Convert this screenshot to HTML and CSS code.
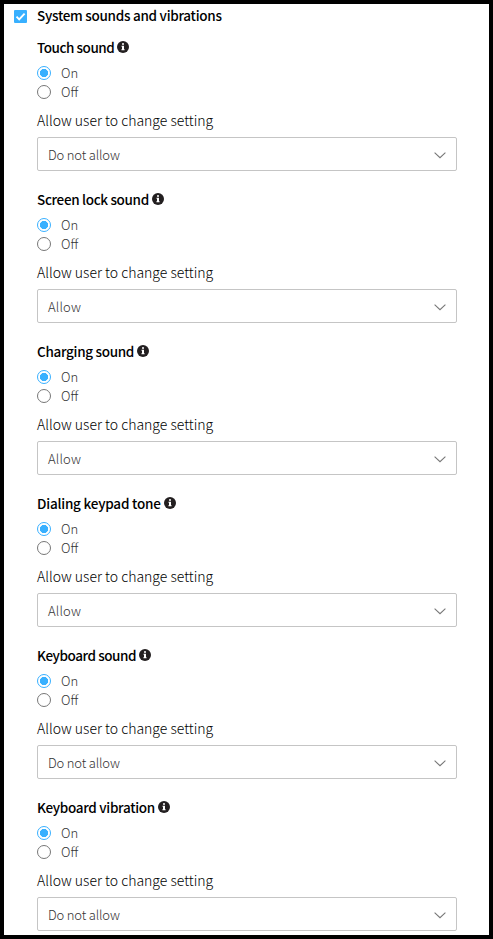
FILE: index.html
```
<!DOCTYPE html>
<html lang="en">
<head>
<meta charset="utf-8">
<title>System sounds and vibrations</title>
<link rel="stylesheet" href="styles.css">
</head>
<body>
<svg class="defs" width="0" height="0" aria-hidden="true">
  <symbol id="info" viewBox="0 0 12 12">
    <circle cx="6" cy="6" r="6" fill="#231f20"/>
    <path d="M5 2.2h2v1.5H5zM4.5 4.8H7v3.5h.6v1H4.4v-1H5V5.8h-.5z" fill="#fff"/>
  </symbol>
  <symbol id="chevron" viewBox="0 0 12 7">
    <path d="M.6.7 6 5.7 11.4.7" fill="none" stroke="#777" stroke-width="1.1"/>
  </symbol>
</svg>
<main class="panel">
  <label class="section-head">
    <svg class="check" viewBox="0 0 13 13"><rect width="13" height="13" rx="1" fill="#38b0ff"/><path d="M2.5 6.6 5.2 9.3 10.6 3.6" fill="none" stroke="#fff" stroke-width="1.9"/></svg>
    <span class="title">System sounds and vibrations</span>
  </label>
  <section class="setting">
    <h2 class="name"><span class="title touch">Touch sound</span><svg class="info"><use href="#info"/></svg></h2>
    <div class="option"><i class="radio on"></i><span>On</span></div>
    <div class="option"><i class="radio"></i><span>Off</span></div>
    <div class="caption">Allow user to change setting</div>
    <div class="select"><span class="value deny">Do not allow</span><svg class="chevron"><use href="#chevron"/></svg></div>
  </section>
  <section class="setting">
    <h2 class="name"><span class="title lock">Screen lock sound</span><svg class="info"><use href="#info"/></svg></h2>
    <div class="option"><i class="radio on"></i><span>On</span></div>
    <div class="option"><i class="radio"></i><span>Off</span></div>
    <div class="caption">Allow user to change setting</div>
    <div class="select"><span class="value">Allow</span><svg class="chevron"><use href="#chevron"/></svg></div>
  </section>
  <section class="setting">
    <h2 class="name"><span class="title charging">Charging sound</span><svg class="info"><use href="#info"/></svg></h2>
    <div class="option"><i class="radio on"></i><span>On</span></div>
    <div class="option"><i class="radio"></i><span>Off</span></div>
    <div class="caption">Allow user to change setting</div>
    <div class="select"><span class="value">Allow</span><svg class="chevron"><use href="#chevron"/></svg></div>
  </section>
  <section class="setting">
    <h2 class="name"><span class="title dialing">Dialing keypad tone</span><svg class="info"><use href="#info"/></svg></h2>
    <div class="option"><i class="radio on"></i><span>On</span></div>
    <div class="option"><i class="radio"></i><span>Off</span></div>
    <div class="caption">Allow user to change setting</div>
    <div class="select"><span class="value">Allow</span><svg class="chevron"><use href="#chevron"/></svg></div>
  </section>
  <section class="setting">
    <h2 class="name"><span class="title keyboard">Keyboard sound</span><svg class="info"><use href="#info"/></svg></h2>
    <div class="option"><i class="radio on"></i><span>On</span></div>
    <div class="option"><i class="radio"></i><span>Off</span></div>
    <div class="caption">Allow user to change setting</div>
    <div class="select"><span class="value deny">Do not allow</span><svg class="chevron"><use href="#chevron"/></svg></div>
  </section>
  <section class="setting">
    <h2 class="name"><span class="title vibration">Keyboard vibration</span><svg class="info"><use href="#info"/></svg></h2>
    <div class="option"><i class="radio on"></i><span>On</span></div>
    <div class="option"><i class="radio"></i><span>Off</span></div>
    <div class="caption">Allow user to change setting</div>
    <div class="select"><span class="value deny">Do not allow</span><svg class="chevron"><use href="#chevron"/></svg></div>
  </section>
</main>
</body>
</html>
```
FILE: styles.css
```
* { box-sizing: border-box; }
body {
  margin: 0;
  background: #fff;
  font-family: "Noto Sans CJK SC", "Noto Sans", sans-serif;
  color: #000;
}
.defs { display: block; }
.panel {
  height: 939px;
  border: 4px solid #000;
  padding: 0 32px 0 33px;
  overflow: hidden;
}
.section-head {
  display: flex;
  align-items: center;
  height: 24px;
  margin-left: -23px;
}
.check { width: 13px; height: 13px; margin-right: 10px; }
.title {
  padding-bottom: 2px;
  font-size: 13.5px;
  font-weight: 500;
  letter-spacing: -.28px;
  line-height: 22px;
  white-space: nowrap;
}
.touch { letter-spacing: -.45px; }
.lock { letter-spacing: -.33px; }
.charging { letter-spacing: -.3px; }
.dialing { letter-spacing: -.22px; }
.keyboard { letter-spacing: -.43px; }
.vibration { letter-spacing: -.31px; }
.setting { height: 152px; padding-top: 9px; }
.name {
  display: flex;
  align-items: center;
  height: 22px;
  margin: 0 0 4px;
}
.info { width: 12px; height: 12px; margin: -2px 0 0 3px; }
.option {
  display: flex;
  align-items: center;
  gap: 10px;
  height: 19px;
  font-size: 13px;
  font-weight: 300;
  line-height: 19px;
  color: #333;
}
.radio {
  width: 14px;
  height: 14px;
  border: 1px solid #777;
  border-radius: 50%;
}
.radio.on {
  border-color: #38b0ff;
  background: radial-gradient(circle, #38b0ff 3.8px, #fff 4.4px);
}
.caption {
  height: 36px;
  padding-top: 9px;
  font-size: 14px;
  font-weight: 300;
  line-height: 20px;
}
.select {
  display: flex;
  align-items: center;
  justify-content: space-between;
  height: 34px;
  padding: 2px 10px 0;
  border: 1px solid #c5c5c5;
  border-radius: 2px;
  font-size: 13px;
  font-weight: 300;
  line-height: 20px;
  color: #333;
}
.value { letter-spacing: .15px; }
.deny { letter-spacing: -.17px; }
.chevron { width: 12px; height: 7px; }
```
